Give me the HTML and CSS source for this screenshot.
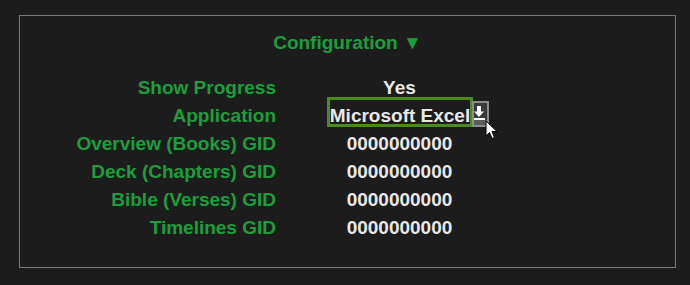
FILE: index.html
```html
<!DOCTYPE html>
<html lang="en">
<head>
  <meta charset="UTF-8">
  <title>Configuration</title>
  <link rel="stylesheet" href="styles.css">
</head>
<body>
  <div class="panel">
    <h2 class="title">Configuration ▼</h2>

    <div class="settings">
      <div class="label">Show Progress</div>
      <div class="value">Yes</div>

      <div class="label">Application</div>
      <div class="value">
        <span class="picker">
          <span class="choice">Microsoft Excel</span>
          <span class="drop">
            <svg width="17" height="26" viewBox="0 0 17 26">
              <rect x="1" y="1" width="15" height="24" fill="#3a3a3a" stroke="#8c8c8c" stroke-width="2"/>
              <rect x="2" y="19" width="13" height="5" fill="#5c5c5c"/>
              <rect x="5" y="5" width="4" height="6" fill="#fff"/>
              <polygon points="2,10.5 12,10.5 7,16" fill="#fff"/>
              <rect x="2" y="17" width="11" height="2" fill="#fff"/>
            </svg>
          </span>
          <svg class="cursor" width="14" height="21" viewBox="0 0 14 21">
            <path d="M1 1 L1 16 L4.5 12.5 L7 18.5 L9.5 17.5 L7 11.5 L12 11.5 Z" fill="#fff" stroke="#000" stroke-width="1" stroke-linejoin="round"/>
          </svg>
        </span>
      </div>

      <div class="label">Overview (Books) GID</div>
      <div class="value">0000000000</div>

      <div class="label">Deck (Chapters) GID</div>
      <div class="value">0000000000</div>

      <div class="label">Bible (Verses) GID</div>
      <div class="value">0000000000</div>

      <div class="label">Timelines GID</div>
      <div class="value">0000000000</div>
    </div>
  </div>
</body>
</html>
```

FILE: styles.css
```css
body { margin: 0; padding: 15px 14px 0 19px; background: #1c1c1c; font-family: "Liberation Sans", Arial, sans-serif; font-weight: bold; font-size: 19px; }
.panel { border: 1px solid #7a7a7a; padding: 13px 0 25px; }
.title { margin: 0 0 17px; font-size: 19px; line-height: 28px; text-align: center; color: #1d9e3c; }
.settings { display: grid; grid-template-columns: 256px 247px; line-height: 28px; }
.label { color: #1d9e3c; text-align: right; }
.value { color: #e8e8e8; text-align: center; }
.picker { position: relative; display: inline-flex; align-items: flex-end; margin-top: -5px; margin-right: -17px; vertical-align: baseline; }
.choice { display: inline-block; border: 3px solid #4b8a1d; padding-top: 7px; line-height: 17px; }
.drop { display: block; width: 17px; height: 26px; margin-left: -1px; }
.drop svg { display: block; }
.cursor { position: absolute; right: -10px; bottom: -14px; }
```
